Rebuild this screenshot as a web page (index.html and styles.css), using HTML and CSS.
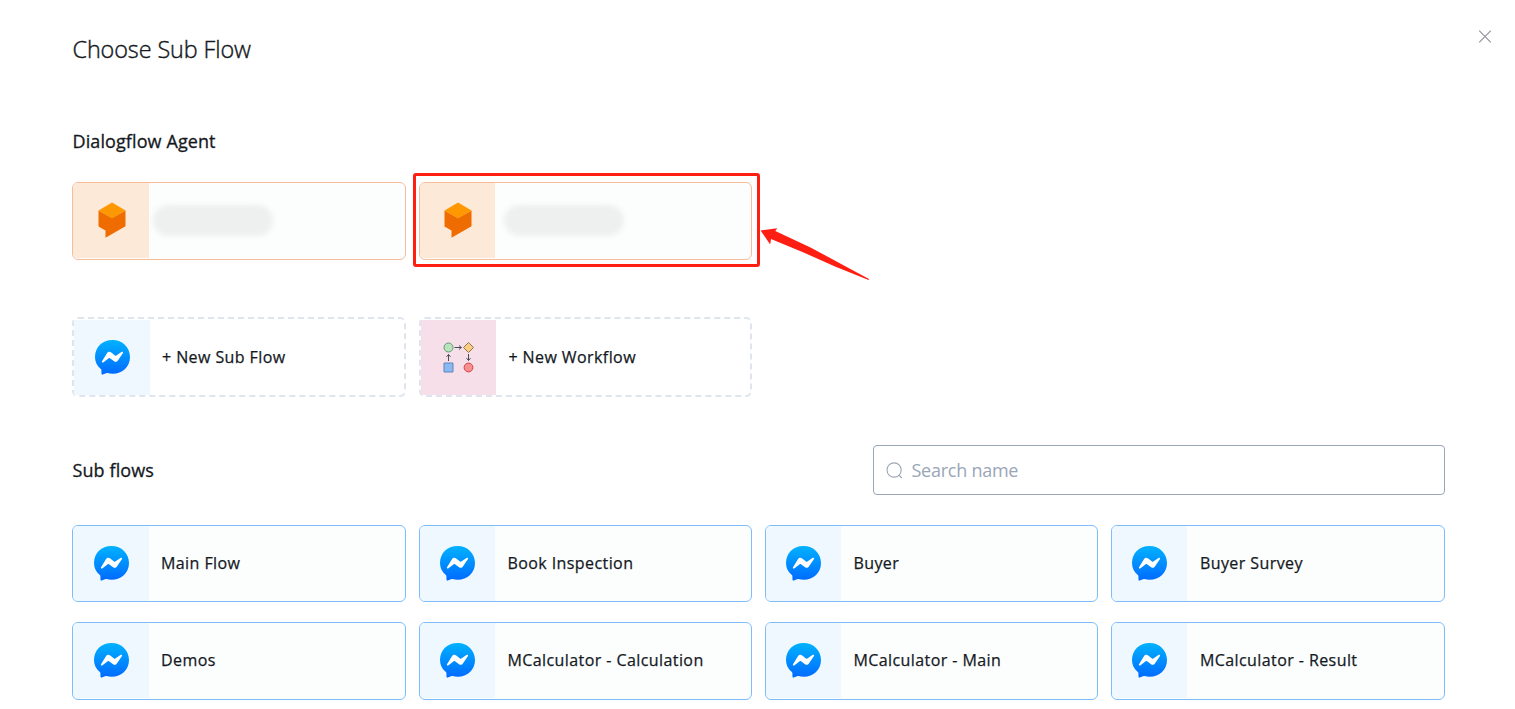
FILE: index.html
```html
<!DOCTYPE html>
<html lang="en">
<head>
<meta charset="utf-8">
<title>Choose Sub Flow</title>
<link rel="stylesheet" href="styles.css">
</head>
<body>
<svg class="defs" width="0" height="0" aria-hidden="true">
  <defs>
    <linearGradient id="blue" x1="0" y1="0" x2="0" y2="1"><stop offset="0" stop-color="#00b2ff"/><stop offset="1" stop-color="#006aff"/></linearGradient>
    <symbol id="messenger" viewBox="0 0 35 35">
      <path fill="url(#blue)" d="M17.500 0C7.400 0 0 7.300 0 16.900c0 5 2.100 9.100 5.800 12 .4.300.6.8.6 1.300l.1 3.600c0 .6.6 1 1.200.8l4-1.500c.3-.1.6-.1.9 0 1.500.4 3.200.6 4.900.6C27.600 33.700 35 26.400 35 16.900S27.600 0 17.500 0Z"/>
      <path fill="#fff" d="M7 21.200l5.100-8.200c.8-1.300 2.600-1.600 3.800-.7l4.100 3.100c.4.300.9.300 1.300 0l5.500-3.600c.8-.500 1.700.3 1.200 1.200l-5.100 7.600c-.8 1.300-2.600 1.600-3.800.7L15 18.200c-.4-.3-.9-.3-1.300 0L8.200 22.400c-.8.500-1.700-.3-1.200-1.200Z"/>
    </symbol>
    <symbol id="dialogflow" viewBox="0 0 28 36">
      <path fill="#ef6c00" d="M.5 8.500v16L7.500 28.500v7.300L27.500 24.300V8.500L14 16Z"/>
      <path fill="#ff9800" d="M14 .5l13.500 8L14 16.300.5 8.500Z"/>
    </symbol>
  </defs>
</svg>
<main class="dialog">
  <header class="head">
    <h1 class="title">Choose Sub Flow</h1>
    <button class="close" aria-label="Close"><svg width="14" height="15" viewBox="0 0 14 15"><path d="M1.200 1.700l11.600 11.600M12.800 1.700L1.200 13.300" stroke="#92959b" stroke-width="1.200"/></svg></button>
  </header>
  <h2 class="heading">Dialogflow Agent</h2>
  <div class="grid agents">
    <div class="card agent"><span class="tile"><svg width="28" height="36"><use href="#dialogflow"/></svg></span><span class="masked first"></span></div>
    <div class="card agent"><span class="tile"><svg width="28" height="36"><use href="#dialogflow"/></svg></span><span class="masked second"></span>
      <span class="highlight"></span>
      <svg class="arrow" width="110" height="54" viewBox="0 0 110 54"><path fill="#ff1e12" d="M.6 3.400L17.300 1.200 15.300 4 50.500 20.400 83 38l26 14-.4.900L75 39.600 43 25.200 11 12.100 10.200 17.500Z"/></svg>
    </div>
  </div>
  <div class="grid creators">
    <div class="card new"><span class="tile"><svg width="35" height="35"><use href="#messenger"/></svg></span><span class="name">+ New Sub Flow</span></div>
    <div class="card new workflow"><span class="tile"><svg width="34" height="34" viewBox="0 0 34 34">
      <circle cx="6.500" cy="6.500" r="4.500" fill="#b8e3bd" stroke="#63997a"/>
      <path d="M26.500 1.500l5 5-5 5-5-5Z" fill="#f9cd82" stroke="#957446"/>
      <path d="M2 22h9v9H2Z" fill="#8cb8f1" stroke="#5a86bd"/>
      <circle cx="26.500" cy="26.500" r="4.400" fill="#f99090" stroke="#cc4248"/>
      <path d="M12.500 6.500h7m-2.500-2l2.300 2-2.300 2M26.500 13v6.500m-2-2.300l2 2.300 2-2.300M6.500 20v-6.500m-2 2.300l2-2.300 2 2.300" fill="none" stroke="#484a57"/>
    </svg></span><span class="name">+ New Workflow</span></div>
  </div>
  <div class="bar">
    <h2 class="heading">Sub flows</h2>
    <label class="search"><svg width="17" height="17" viewBox="0 0 17 17"><circle cx="8.100" cy="8" r="7.100" fill="none" stroke="#9da6b4" stroke-width="1.100"/><path d="M12.800 13l3 3" stroke="#9da6b4" stroke-width="1.100"/></svg><input class="field" type="text" placeholder="Search name"></label>
  </div>
  <div class="grid flows">
    <div class="card"><span class="tile"><svg width="35" height="35"><use href="#messenger"/></svg></span><span class="name">Main Flow</span></div>
    <div class="card"><span class="tile"><svg width="35" height="35"><use href="#messenger"/></svg></span><span class="name">Book Inspection</span></div>
    <div class="card"><span class="tile"><svg width="35" height="35"><use href="#messenger"/></svg></span><span class="name">Buyer</span></div>
    <div class="card"><span class="tile"><svg width="35" height="35"><use href="#messenger"/></svg></span><span class="name">Buyer Survey</span></div>
    <div class="card"><span class="tile"><svg width="35" height="35"><use href="#messenger"/></svg></span><span class="name">Demos</span></div>
    <div class="card"><span class="tile"><svg width="35" height="35"><use href="#messenger"/></svg></span><span class="name">MCalculator - Calculation</span></div>
    <div class="card"><span class="tile"><svg width="35" height="35"><use href="#messenger"/></svg></span><span class="name">MCalculator - Main</span></div>
    <div class="card"><span class="tile"><svg width="35" height="35"><use href="#messenger"/></svg></span><span class="name">MCalculator - Result</span></div>
  </div>
</main>
</body>
</html>
```
FILE: styles.css
```css
* { box-sizing: border-box; }
body { margin: 0; background: #fff; color: #15191e; font-family: "Open Sans", "Noto Sans", sans-serif; overflow: hidden; }
.defs { position: absolute; }
.dialog { height: 709px; padding: 29px 70px 0 72px; }
.head { display: flex; justify-content: space-between; height: 40px; margin-right: -47px; }
.title { margin: 0; padding-left: .5px; font-size: 23.400px; font-weight: 300; line-height: 40px; letter-spacing: -.1px; -webkit-text-stroke: .4px; }
.close { display: flex; width: 14px; height: 15px; padding: 0; border: 0; background: none; }
.heading { margin: 0; padding-left: .5px; font-size: 18px; font-weight: 500; line-height: 30px; letter-spacing: .1px; -webkit-text-stroke: .3px; }
.head + .heading { margin-top: 57px; }
.grid { display: grid; grid-template-columns: 334px 333px 333px 334px; column-gap: 13px; }
.agents { margin-top: 26px; }
.creators { margin-top: 57px; }
.flows { margin-top: 30px; row-gap: 20px; }
.card { position: relative; display: flex; align-items: center; height: 77px; border: 1px solid #7fbdfa; border-radius: 6px; background: #fcfefe; }
.tile { display: flex; align-items: center; justify-content: center; flex: none; width: 75px; height: 100%; border-radius: 5px 0 0 5px; background: #eff7ff; }
.card:nth-child(4n+1) .tile { width: 76px; }
.name { margin-left: 12.400px; font-size: 16px; font-weight: 500; letter-spacing: .42px; white-space: nowrap; -webkit-text-stroke: .25px; }
.card:nth-child(4n+1) .name { margin-left: 12px; }
.card:nth-child(4n) .name { margin-left: 12.900px; }
.flows .card:nth-child(n+5) { height: 78px; padding-bottom: 1px; }
.flows .name { padding-bottom: 1px; }
.agent { height: 78px; border-color: #f7bd9b; }
.agent .tile { padding-bottom: 1px; background: #fde9d7; background-clip: content-box; }
.agent .tile svg { margin-bottom: 2px; }
.agent:first-child .tile svg { margin-left: 1px; }
.new { height: 80px; border: 2px dashed #dfe5ee; background: #fff; }
.new .tile { padding-top: 1px; border-radius: 0; background-clip: content-box; }
.workflow .tile { background-color: #f6dfe9; }
.masked { width: 120px; height: 31px; margin-bottom: 1px; border-radius: 16px; background: #eeefef; filter: blur(2.500px); }
.first { margin-left: 4px; }
.second { margin-left: 9px; }
.highlight { position: absolute; inset: -10px -9px -8px -7px; border: 3px solid #ff1e12; border-radius: 3px; }
.arrow { position: absolute; left: 340px; top: 44px; }
.bar { display: flex; align-items: center; justify-content: space-between; margin-top: 48px; }
.search { display: flex; align-items: center; width: 572px; height: 50px; padding-left: 12.400px; border: 1px solid #9ba6b6; border-radius: 4px; }
.field { flex: 1; margin-left: 8.100px; padding: 0; border: 0; outline: 0; background: none; font: 400 18px "Open Sans", "Noto Sans", sans-serif; letter-spacing: -.25px; }
.field::placeholder { color: #9aa6b8; opacity: 1; }
```
